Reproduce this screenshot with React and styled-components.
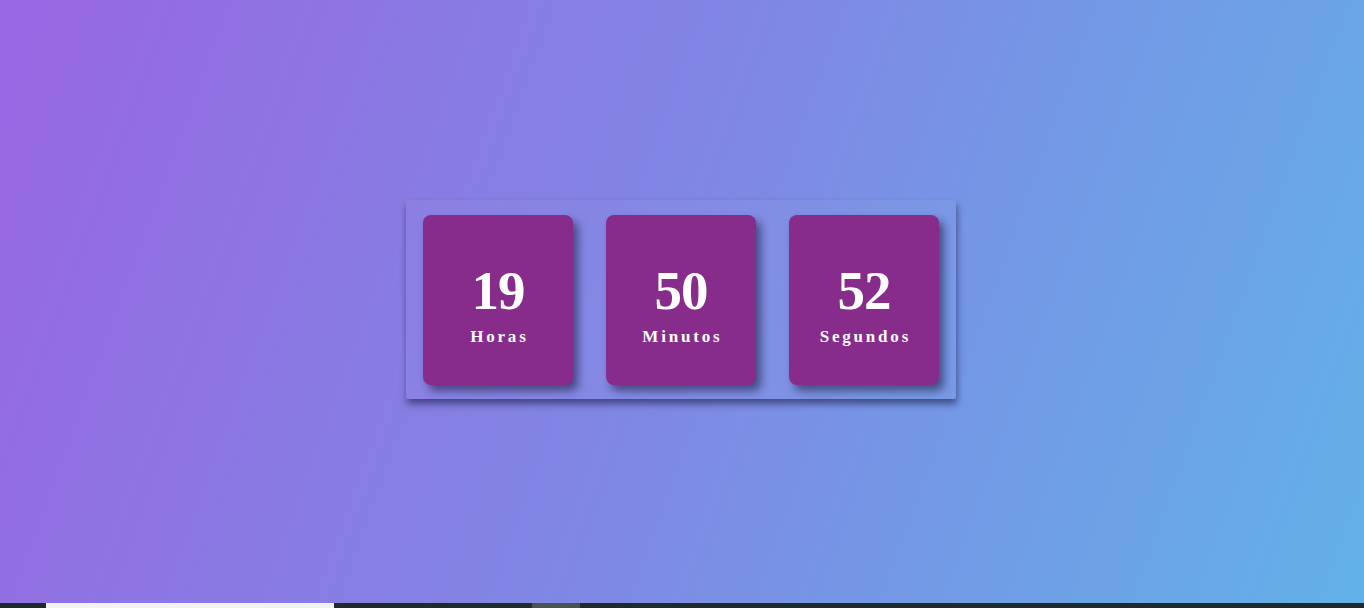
import React from "react";
import styled, { createGlobalStyle } from "styled-components";

const GlobalStyle = createGlobalStyle`
  * { box-sizing: border-box; }
  html, body, #root { margin: 0; height: 100%; }
  body {
    font-family: "Liberation Serif", "Times New Roman", serif;
    overflow: hidden;
  }
`;

const Page = styled.div`
  height: 100vh;
  display: flex;
  flex-direction: column;
  background: linear-gradient(110deg, #9866e2 0%, #7f88e4 50%, #62b1e8 100%);
`;

const Stage = styled.main`
  flex: 1;
  display: flex;
  align-items: center;
  justify-content: center;
  padding: 0 2px 5px 0;
`;

const Clock = styled.div`
  display: flex;
  gap: 33px;
  padding: 15px 17px 14px;
  background: rgba(255, 255, 255, 0.03);
  border-radius: 2px;
  box-shadow: 1px 5px 7px rgba(20, 20, 60, 0.55);
`;

const Card = styled.div`
  width: 150px;
  height: 170px;
  border-radius: 8px;
  background: #882c8c;
  box-shadow: 5px 6px 9px rgba(30, 30, 70, 0.6);
  display: flex;
  flex-direction: column;
  align-items: center;
  justify-content: center;
  color: #fff;
  padding-top: 10px;
`;

const Value = styled.span`
  font-size: 55px;
  font-weight: 700;
  line-height: 1;
  letter-spacing: -1px;
`;

const Label = styled.span`
  margin-top: 9px;
  font-size: 17px;
  font-weight: 700;
  letter-spacing: 2.8px;
  padding-left: 2.8px;
`;

const Taskbar = styled.div`
  height: 5px;
  flex: none;
  background: #1e2a2b;
  display: flex;
`;

const TaskSlot = styled.div`
  flex: none;
  width: ${({ w }) => w}px;
  margin-left: ${({ left }) => left}px;
  background: ${({ tone }) => tone};
`;

const units = [
  { value: "19", label: "Horas" },
  { value: "50", label: "Minutos" },
  { value: "52", label: "Segundos" },
];

export default function App() {
  return (
    <Page>
      <GlobalStyle />
      <Stage>
        <Clock>
          {units.map((u) => (
            <Card key={u.label}>
              <Value>{u.value}</Value>
              <Label>{u.label}</Label>
            </Card>
          ))}
        </Clock>
      </Stage>
      <Taskbar>
        <TaskSlot left={46} w={288} tone="#f2f2f2" />
        <TaskSlot left={198} w={48} tone="#4b5352" />
      </Taskbar>
    </Page>
  );
}
